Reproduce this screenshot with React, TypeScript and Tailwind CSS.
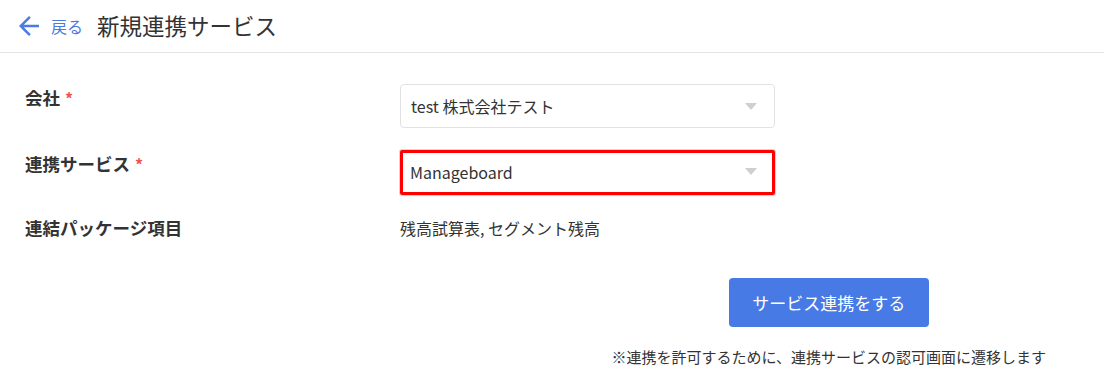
import React from "react";
import { MdArrowBack } from "react-icons/md";

const Caret = () => (
  <svg width="12" height="7" viewBox="0 0 12 7" className="shrink-0">
    <path d="M0 0h12L6 7z" fill="#cfcfcf" />
  </svg>
);

const Required = () => <span className="ml-[5px] text-[16px] text-[#f0524f] align-baseline">*</span>;

const App = () => {
  return (
    <div
      className="w-[1104px] h-[391px] bg-white text-[#333] overflow-hidden"
      style={{ fontFamily: '"Noto Sans CJK JP", "Noto Sans", sans-serif' }}
    >
      {/* header */}
      <div className="flex items-center h-[53px] border-b border-[#e3e3e3] pl-[14px]">
        <MdArrowBack size={30} className="text-[#4a7be3]" />
        <span className="ml-[7px] text-[16px] text-[#4a7be3]">戻る</span>
        <span className="ml-[14px] text-[22.5px] text-[#333]">新規連携サービス</span>
      </div>

      <div className="pl-[25px] pt-[31px]">
        {/* company */}
        <div className="flex items-start">
          <div className="w-[375px] pt-[1px] text-[17.5px] font-bold leading-[25px]">
            会社
            <Required />
          </div>
          <div className="flex items-center justify-between w-[375px] h-[44px] border border-[#e2e2e2] rounded-[4px] pl-[10px] pr-[17px]">
            <span className="text-[16px]">test 株式会社テスト</span>
            <Caret />
          </div>
        </div>

        {/* service */}
        <div className="flex items-start mt-[22px]">
          <div className="w-[375px] pt-[1px] text-[17.5px] font-bold leading-[25px]">
            連携サービス
            <Required />
          </div>
          <div className="flex items-center justify-between w-[375px] h-[45px] border-[3px] border-[#f00] rounded-[2px] pl-[7px] pr-[15px] pb-[2px] shadow-[0_0_0_1px_#c9d6f5]">
            <span className="text-[16px]">Manageboard</span>
            <Caret />
          </div>
        </div>

        {/* package items */}
        <div className="flex items-center mt-[20px]">
          <div className="w-[375px] text-[17.5px] font-bold leading-[25px]">連結パッケージ項目</div>
          <div className="text-[16px]">残高試算表, セグメント残高</div>
        </div>

        <div className="flex justify-end pr-[58px] mt-[38px]">
          <div className="flex flex-col items-center">
            <button className="w-[200px] h-[49px] rounded-[4px] bg-[#477ae5] text-white text-[17px]">
              サービス連携をする
            </button>
            <p className="mt-[19px] text-[15px] leading-[22px]">
              ※連携を許可するために、連携サービスの認可画面に遷移します
            </p>
          </div>
        </div>
      </div>
    </div>
  );
};

export default App;
